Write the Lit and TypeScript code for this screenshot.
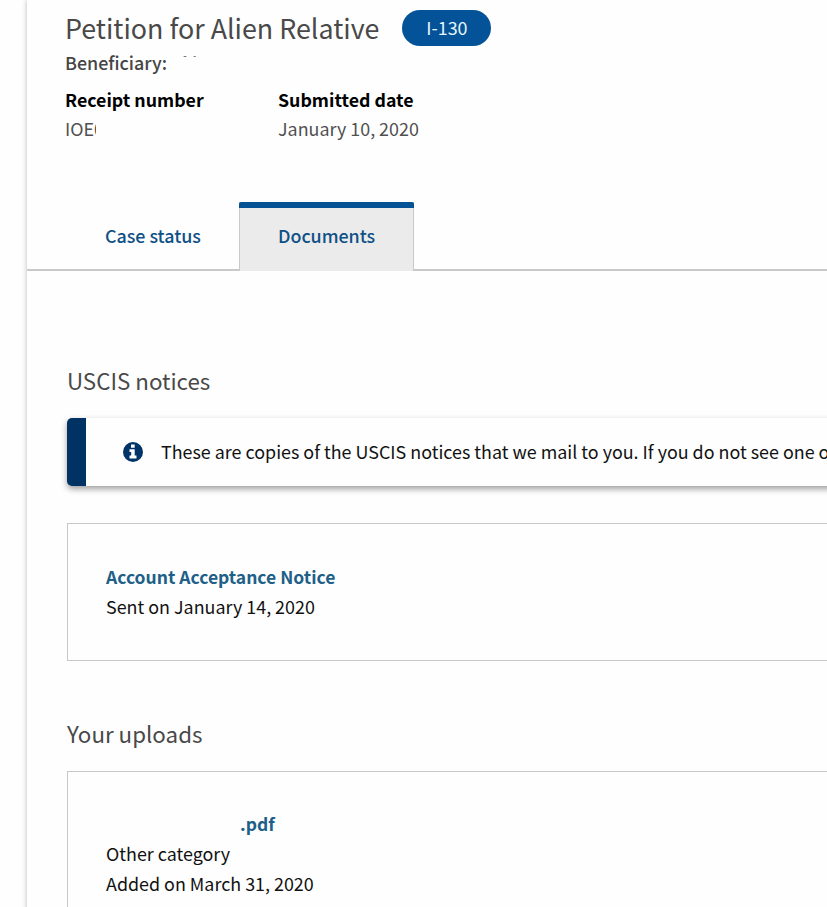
import { LitElement, html, css, svg } from "lit";
import { customElement } from "lit/decorators.js";

const infoIcon = svg`<svg class="icon" width="20" height="20" viewBox="0 0 20 20">
  <circle cx="10" cy="10" r="10" fill="#003366"></circle>
  <path d="M8 2.5h3.7v3.2H8zM6.5 7.2h5.2v6.3h1.8v2.9h-7v-2.9h1.7V10H6.5z" fill="#fff"></path>
</svg>`;

// Tops of the letters left above the blanked-out name.
const nameTraces = svg`<svg class="traces" width="20" height="3" viewBox="0 0 20 3">
  <path d="M3 1.5h2M13 1.5h1.5" stroke="#555" stroke-width="1"></path>
  <path d="M2 1.5h4M12 1.5h3" stroke="#999" stroke-width="1" opacity="0.5"></path>
</svg>`;

@customElement("app-root")
export class AppRoot extends LitElement {
  static styles = css`
    :host {
      display: block;
      height: 907px;
      overflow: hidden;
      background: #fefefe;
      font-family: "Noto Sans CJK SC", "Noto Sans", sans-serif;
      font-size: 17.9px;
      line-height: 30px;
      color: #212121;
    }
    * { box-sizing: border-box; }
    h1, h2, p, dl, dt, dd { margin: 0; font-weight: 400; }
    a { text-decoration: none; color: #205f87; font-weight: 500; }
    .panel {
      margin-left: 27px;
      width: 1100px;
      height: 930px;
      background: #fefefe;
      box-shadow: 0 0 5px rgba(0, 0, 0, 0.28);
    }
    .header { height: 202px; padding: 10px 0 0 38px; }
    .title-row { display: flex; align-items: center; height: 36px; gap: 23px; }
    h1 { font-size: 26.85px; line-height: 36px; color: #494949; }
    .badge {
      width: 89px;
      height: 36px;
      border-radius: 18px;
      background: #045297;
      color: #e4f6ff;
      text-align: center;
      line-height: 34px;
    }
    .beneficiary { display: flex; margin-top: 1px; color: #454545; font-weight: 500; }
    .traces { display: block; margin: 8px 0 0 14px; }
    .facts { display: flex; margin-top: 8px; }
    .facts > div { width: 213px; }
    dt { font-weight: 700; color: #000; line-height: 29px; font-size: 17.8px; }
    dd { color: #505050; line-height: 29px; }
    .tabs {
      display: flex;
      height: 69px;
      padding-left: 39px;
      border-bottom: 2px solid #c9c9c9;
    }
    .tab {
      height: 69px;
      padding-top: 6px;
      line-height: 54px;
      color: #0f5186;
      white-space: nowrap;
    }
    .tab.first { width: 173px; padding-left: 39px; letter-spacing: -0.03px; }
    .tab.active {
      width: 175px;
      padding: 0 0 0 38px;
      background: #ebebeb;
      border-left: 1px solid #c9c9c9;
      border-right: 1px solid #c9c9c9;
      letter-spacing: -0.05px;
    }
    .tab.active::before {
      content: "";
      display: block;
      height: 6px;
      margin: 0 -1px 0 -39px;
      border-radius: 2px 2px 0 0;
      background: #045294;
    }
    .content { padding: 94px 0 0 40px; }
    h2 { font-size: 22.35px; line-height: 30px; color: #494949; }
    .alert {
      display: flex;
      align-items: center;
      height: 68px;
      margin-top: 23px;
      border-left: 19px solid #003263;
      border-radius: 5px;
      background: #fefefe;
      padding-left: 37px;
      box-shadow: 0 3px 6px rgba(0, 0, 0, 0.38);
      white-space: nowrap;
      color: #111;
    }
    .alert span { padding-bottom: 2px; }
    .icon { display: block; margin-right: 18px; flex: none; }
    .card {
      border: 1px solid #c8c8c8;
      padding: 38px;
      color: #111;
    }
    .card a { display: block; height: 29px; font-weight: 700; font-size: 17.5px; }
    .notice { margin-top: 37px; height: 138px; }
    .uploads { margin-top: 57px; }
    .upload { margin-top: 23px; padding-top: 37px; height: 170px; }
    .card .file { padding-left: 134px; }
    .redacted { display: block; overflow: hidden; width: 30.5px; white-space: nowrap; }
  `;

  render() {
    return html`
      <main class="panel">
        <header class="header">
          <div class="title-row">
            <h1>Petition for Alien Relative</h1>
            <span class="badge">I-130</span>
          </div>
          <p class="beneficiary"><span>Beneficiary:</span>${nameTraces}</p>
          <dl class="facts">
            <div><dt>Receipt number</dt><dd><span class="redacted">IOE0</span></dd></div>
            <div><dt>Submitted date</dt><dd>January 10, 2020</dd></div>
          </dl>
        </header>
        <nav class="tabs">
          <a class="tab first">Case status</a>
          <a class="tab active">Documents</a>
        </nav>
        <section class="content">
          <h2>USCIS notices</h2>
          <div class="alert">${infoIcon}<span>These are copies of the USCIS notices that we mail to you. If you do not see one of</span></div>
          <div class="card notice">
            <a>Account Acceptance Notice</a>
            <p>Sent on January 14, 2020</p>
          </div>
          <h2 class="uploads">Your uploads</h2>
          <div class="card upload">
            <a class="file">.pdf</a>
            <p>Other category</p>
            <p>Added on March 31, 2020</p>
          </div>
        </section>
      </main>
    `;
  }
}
